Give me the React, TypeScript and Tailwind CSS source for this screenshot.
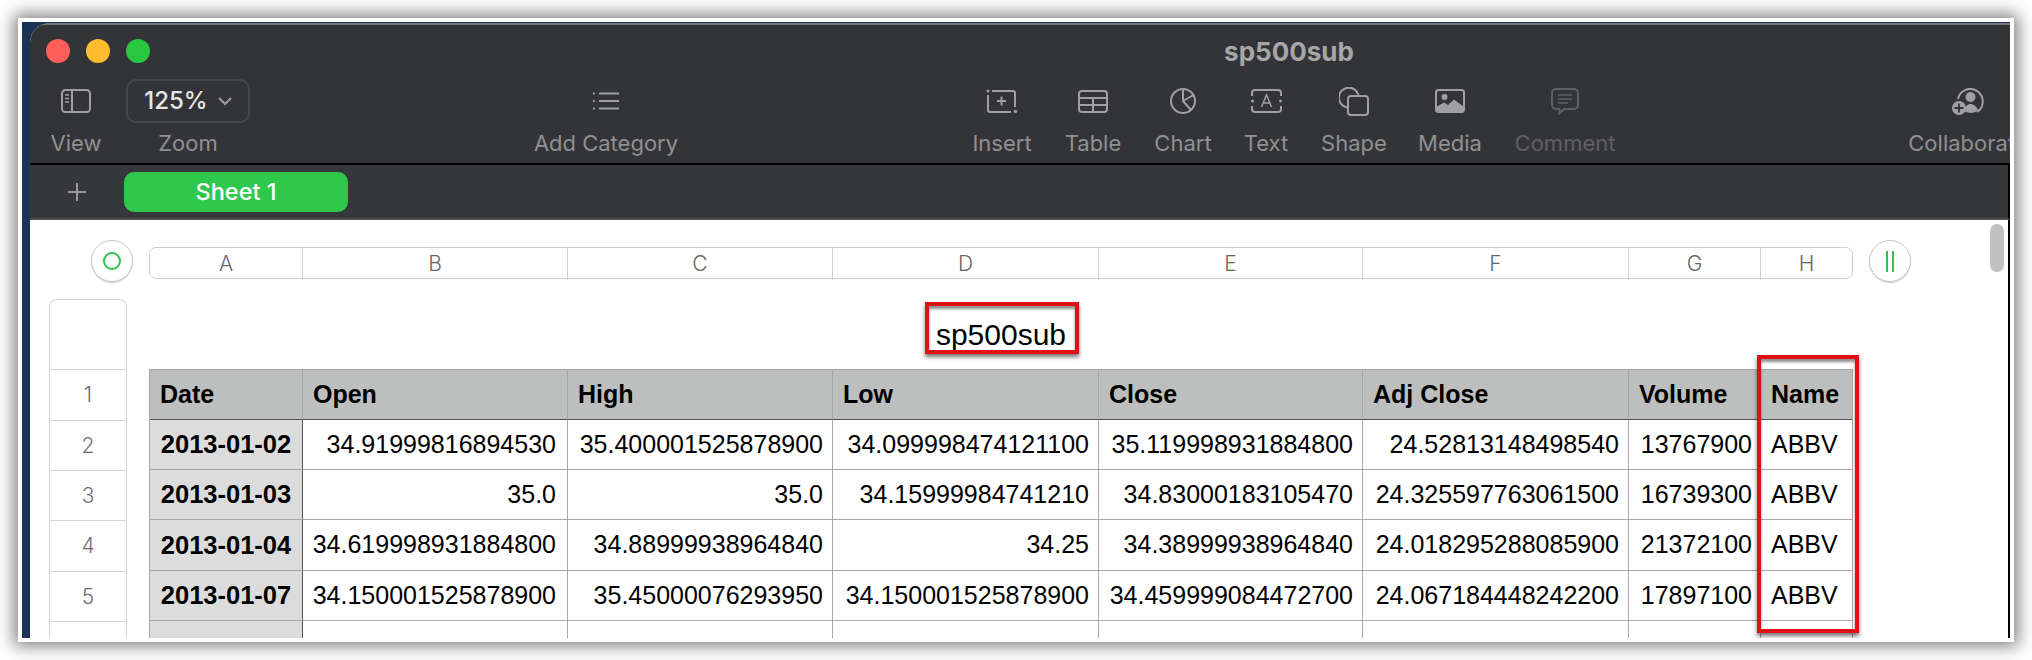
import React from "react";

const S = "#a0a0a2";

function ViewIcon() {
  return (
    <svg width="30" height="24" viewBox="0 0 30 24" fill="none" stroke={S} strokeWidth="2">
      <rect x="1" y="1" width="28" height="22" rx="3.5" />
      <path d="M11 1v22" />
      <path d="M4 6h4M4 9.5h4M4 13h4" strokeWidth="1.6" />
    </svg>
  );
}
function ListIcon() {
  return (
    <svg width="26" height="18" viewBox="0 0 26 18" fill="none" stroke={S} strokeWidth="1.8">
      <path d="M6 1.5h20M6 9h20M6 16.500h20" />
      <path d="M0 0l2.500 1.500L0 3zM0 7.500L2.500 9 0 10.500zM0 15l2.500 1.500L0 18z" fill={S} stroke="none" />
    </svg>
  );
}
function InsertIcon() {
  return (
    <svg width="32" height="25" viewBox="0 0 32 25" fill="none" stroke={S} strokeWidth="2">
      <circle cx="2" cy="2" r="1.500" fill={S} stroke="none" />
      <circle cx="29.500" cy="22.500" r="1.700" fill={S} stroke="none" />
      <path d="M6 2h21a2 2 0 0 1 2 2v14" />
      <path d="M2 6v15a2 2 0 0 0 2 2h21" />
      <path d="M15.500 7.500v9M11 12h9" />
    </svg>
  );
}
function TableIcon() {
  return (
    <svg width="30" height="23" viewBox="0 0 30 23" fill="none" stroke={S} strokeWidth="2">
      <rect x="1" y="1" width="28" height="21" rx="3" />
      <path d="M1 8h28M1 15h28M15 8v14" />
    </svg>
  );
}
function ChartIcon() {
  return (
    <svg width="26" height="26" viewBox="0 0 26 26" fill="none" stroke={S} strokeWidth="2">
      <circle cx="13" cy="13" r="12" />
      <path d="M13 1v12l8 9M13 13l10.500-6" />
    </svg>
  );
}
function TextIcon() {
  return (
    <svg width="31" height="24" viewBox="0 0 31 24" fill="none" stroke={S} strokeWidth="2">
      <path d="M1 7V4a3 3 0 0 1 3-3h23a3 3 0 0 1 3 3v3M1 17v3a3 3 0 0 0 3 3h23a3 3 0 0 0 3-3v-3" />
      <circle cx="1.500" cy="12" r="1.500" fill={S} stroke="none" />
      <circle cx="29.500" cy="12" r="1.500" fill={S} stroke="none" />
      <path d="M10.500 18L15.500 6l5 12M12.500 14h6" strokeWidth="1.500" />
    </svg>
  );
}
function ShapeIcon() {
  return (
    <svg width="30" height="29" viewBox="0 0 30 29" fill="none" stroke={S} strokeWidth="2">
      <path d="M8 20.500A10 10 0 1 1 19.500 8" />
      <rect x="9" y="9" width="20" height="19" rx="3" />
    </svg>
  );
}
function MediaIcon() {
  return (
    <svg width="30" height="24" viewBox="0 0 30 24" fill="none">
      <rect x="1" y="1" width="28" height="22" rx="2.500" stroke={S} strokeWidth="2" />
      <circle cx="9.500" cy="8" r="3" fill={S} />
      <path d="M1 21v-3l8-4.500 4 2.500 6-5.500L29 18v3a2 2 0 0 1-2 2H3a2 2 0 0 1-2-2z" fill={S} />
    </svg>
  );
}
function CommentIcon() {
  const c = "#5f6063";
  return (
    <svg width="28" height="27" viewBox="0 0 28 27" fill="none" stroke={c} strokeWidth="2">
      <path d="M5 1h18a4 4 0 0 1 4 4v12a4 4 0 0 1-4 4H13l-4.500 4.500V21H5a4 4 0 0 1-4-4V5a4 4 0 0 1 4-4z" />
      <path d="M7 7h14M7 11h14M7 15h10" strokeWidth="1.500" />
    </svg>
  );
}
function CollabIcon() {
  return (
    <svg width="32" height="27" viewBox="0 0 32 27" fill="none">
      <path d="M6 11A12.500 12.500 0 1 1 25 24" stroke={S} strokeWidth="2" />
      <circle cx="18.500" cy="9" r="5" fill={S} />
      <path d="M12 23c1-4.500 3.500-7 6.500-7s6 2.500 7.500 6c-3 3.500-9 4-14 1z" fill={S} />
      <circle cx="7" cy="20" r="7" fill={S} />
      <path d="M7 15.500v9M2.500 20h9" stroke="#333437" strokeWidth="1.800" />
    </svg>
  );
}

function Tool({ w, ml, label, dim, children }: { w: string; ml: string; label: string; dim?: boolean; children: React.ReactNode }) {
  return (
    <div className={`${w} ${ml} flex shrink-0 flex-col items-center`}>
      <div className="flex h-[44px] items-center justify-center">{children}</div>
      <div className={`flex h-[41px] items-center whitespace-nowrap text-[22px] ${dim ? "text-[#5f6063]" : "text-[#909092]"}`}>{label}</div>
    </div>
  );
}

const headers = ["Date", "Open", "High", "Low", "Close", "Adj Close", "Volume", "Name"];
const rows = [
  ["2013-01-02", "34.91999816894530", "35.400001525878900", "34.099998474121100", "35.119998931884800", "24.52813148498540", "13767900", "ABBV"],
  ["2013-01-03", "35.0", "35.0", "34.15999984741210", "34.83000183105470", "24.325597763061500", "16739300", "ABBV"],
  ["2013-01-04", "34.619998931884800", "34.88999938964840", "34.25", "34.38999938964840", "24.018295288085900", "21372100", "ABBV"],
  ["2013-01-07", "34.150001525878900", "35.45000076293950", "34.150001525878900", "34.459999084472700", "24.067184448242200", "17897100", "ABBV"],
  ["2013-01-08", "", "", "", "", "", "", "ABBV"],
];
const rowH = ["h-[50px]", "h-[50px]", "h-[51px]", "h-[50px]", "h-[50px] pt-[5px]"];

export default function App() {
  return (
    <div className="h-[660px] w-[2032px] overflow-hidden bg-white pl-[18px] pt-[18px] font-['Liberation_Sans',sans-serif]">
      <div className="h-[624px] w-[1996px] bg-white pb-[4px] pl-[4px] pr-[4px] pt-[4px] shadow-[0_0_16px_4px_rgba(0,0,0,0.5)]">
        <div className="h-[616px] w-[1988px] overflow-hidden bg-[#1c3358] pl-[8px] pt-[1px]">
          <div className="flex h-[615px] w-[1980px] flex-col overflow-hidden rounded-tl-[20px] bg-white">
            {/* toolbar */}
            <div className="h-[142px] shrink-0 overflow-hidden border-b-2 border-t-2 border-b-black border-t-[#77787a] bg-[#333437] font-['Inter',sans-serif]">
              <div className="flex h-[54px] items-center pb-[2px] pl-[16px]">
                <div className="flex gap-[16px]">
                  <div className="h-[24px] w-[24px] rounded-full bg-[#ff5f57]" />
                  <div className="h-[24px] w-[24px] rounded-full bg-[#febc2e]" />
                  <div className="h-[24px] w-[24px] rounded-full bg-[#28c840]" />
                </div>
                <div className="ml-[1072px] w-[134px] whitespace-nowrap text-center text-[26px] font-bold text-[#a6a6a8]">sp500sub</div>
              </div>
              <div className="flex pl-[10px]">
                <Tool w="w-[72px]" ml="ml-0" label="View"><ViewIcon /></Tool>
                <Tool w="w-[124px]" ml="ml-[14px]" label="Zoom">
                  <div className="flex h-[44px] w-[124px] items-center justify-center gap-[10px] rounded-[10px] border-2 border-[#48494c] text-[24px] font-medium text-[#e6e6e7]">
                    125%
                    <svg width="14" height="9" viewBox="0 0 14 9" fill="none" stroke="#9a9a9c" strokeWidth="2.200"><path d="M1 1l6 6 6-6" /></svg>
                  </div>
                </Tool>
                <Tool w="w-[160px]" ml="ml-[276px]" label="Add Category"><ListIcon /></Tool>
                <Tool w="w-[70px]" ml="ml-[281px]" label="Insert"><InsertIcon /></Tool>
                <Tool w="w-[70px]" ml="ml-[21px]" label="Table"><TableIcon /></Tool>
                <Tool w="w-[70px]" ml="ml-[20px]" label="Chart"><ChartIcon /></Tool>
                <Tool w="w-[60px]" ml="ml-[18px]" label="Text"><TextIcon /></Tool>
                <Tool w="w-[76px]" ml="ml-[20px]" label="Shape"><ShapeIcon /></Tool>
                <Tool w="w-[76px]" ml="ml-[20px]" label="Media"><MediaIcon /></Tool>
                <Tool w="w-[100px]" ml="ml-[27px]" label="Comment" dim><CommentIcon /></Tool>
                <Tool w="w-[120px]" ml="ml-[293px]" label="Collaborate"><CollabIcon /></Tool>
              </div>
            </div>
            {/* sheet tabs */}
            <div className="flex h-[55px] shrink-0 items-start border-b-2 border-r-2 border-b-[#4b4c4e] border-r-black bg-[#35373a] pt-[7px] font-['Inter',sans-serif]">
              <div className="flex h-[40px] w-[94px] items-center justify-center">
                <svg width="20" height="20" viewBox="0 0 20 20" fill="none" stroke="#98989a" strokeWidth="2"><path d="M10 1v18M1 10h18" /></svg>
              </div>
              <div className="flex h-[40px] w-[224px] items-center justify-center rounded-[10px] bg-[#2ec84a] text-[23.5px] font-medium text-white">Sheet 1</div>
            </div>
            {/* canvas */}
            <div className="relative min-h-0 flex-1 overflow-hidden border-r-2 border-black bg-white">
              <div className="absolute right-[4px] top-[4px] h-[48px] w-[14px] rounded-full bg-[#c1c1c1]" />
              <div className="flex h-[62px] items-center gap-[16px] pl-[61px] pt-[20px]">
                <div className="flex h-[42px] w-[42px] shrink-0 items-center justify-center rounded-full border border-[#c4c4c4] shadow-[0_1px_1px_rgba(0,0,0,0.2)]">
                  <div className="h-[18px] w-[18px] rounded-full border-2 border-[#30c24b]" />
                </div>
                <div className="mt-[4px] grid h-[32px] w-[1704px] grid-cols-[152px_265px_265px_266px_264px_266px_132px_92px] rounded-[7px] border border-[#cfcfcf] font-['Inter',sans-serif] text-[21px] font-light text-[#666668]">
                  {["A", "B", "C", "D", "E", "F", "G", "H"].map((c, i) => (
                    <div key={c} className={`flex items-center justify-center ${i ? "border-l border-[#d2d2d2]" : ""}`}>{c}</div>
                  ))}
                </div>
                <div className="flex h-[42px] w-[42px] shrink-0 items-center justify-center gap-[4px] rounded-full border border-[#c4c4c4] shadow-[0_1px_1px_rgba(0,0,0,0.2)]">
                  <div className="h-[21px] w-[2px] bg-[#30c24b]" />
                  <div className="h-[21px] w-[2px] bg-[#30c24b]" />
                </div>
              </div>
              <div className="flex pl-[19px] pt-[17px]">
                {/* row numbers */}
                <div className="w-[78px] shrink-0 rounded-t-[8px] border border-b-0 border-[#d2d2d2] font-['Inter',sans-serif] text-[21px] font-light text-[#6e6e70]">
                  <div className="h-[69px]" />
                  <div className="flex h-[51px] items-center justify-center border-t border-[#d2d2d2]">1</div>
                  {["2", "3", "4", "5", ""].map((n, i) => (
                    <div key={i} className={`flex ${rowH[i]} items-center justify-center border-t border-[#d2d2d2]`}>{n}</div>
                  ))}
                </div>
                {/* table */}
                <div className="relative ml-[22px] w-[1704px] shrink-0">
                  <div className="flex h-[70px] items-end justify-center pb-[16px] text-[30px] leading-[36px] text-black">sp500sub</div>
                  <div className="grid w-[1704px] grid-cols-[152px_265px_265px_266px_264px_266px_132px_92px] border-l border-r border-t border-[#a8a8a8] text-[25px] text-black">
                    {headers.map((h, i) => (
                      <div key={h} className={`flex h-[50px] items-center border-b border-b-[#555] bg-[#bdbfbe] pl-[10px] font-bold ${i ? "border-l border-l-[#a8a8a8]" : ""}`}>{h}</div>
                    ))}
                    {rows.map((r, ri) =>
                      r.map((v, ci) => (
                        <div
                          key={`${ri}-${ci}`}
                          className={`flex ${rowH[ri]} items-center whitespace-nowrap border-b border-b-[#a8a8a8] ${
                            ci === 0
                              ? "justify-center bg-[#dcdcdc] text-[25.5px] font-bold"
                              : ci === 7
                                ? "border-l border-l-[#a8a8a8] pl-[10px]"
                                : ci === 6
                                  ? "justify-end border-l border-l-[#a8a8a8] pr-[8px]"
                                  : ci === 1
                                    ? "justify-end border-l border-l-[#555] pr-[11px]"
                                    : "justify-end border-l border-l-[#a8a8a8] pr-[9px]"
                          }`}
                        >
                          {v}
                        </div>
                      ))
                    )}
                  </div>
                  <div className="absolute left-[776px] top-[3px] h-[52px] w-[154px] border-4 border-[#e20f14] shadow-[0_3px_4px_rgba(0,0,0,0.55),inset_0_3px_3px_rgba(0,0,0,0.45)]" />
                  <div className="absolute left-[1608px] top-[56px] h-[278px] w-[102px] border-4 border-[#e20f14] shadow-[0_3px_4px_rgba(0,0,0,0.55),inset_0_3px_3px_rgba(0,0,0,0.45)]" />
                </div>
              </div>
            </div>
          </div>
        </div>
      </div>
    </div>
  );
}
